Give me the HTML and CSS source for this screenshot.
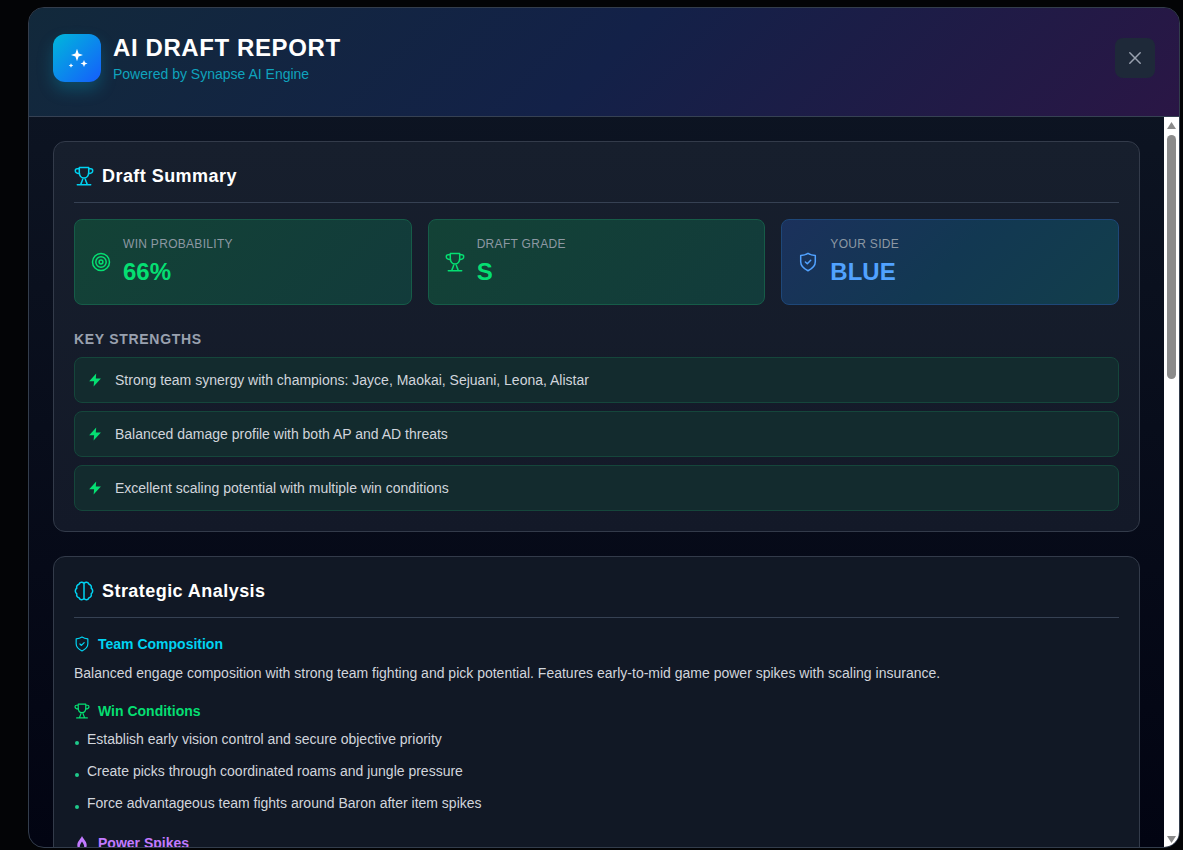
FILE: index.html
```html
<!DOCTYPE html>
<html lang="en">
<head>
    <meta charset="UTF-8">
    <meta name="viewport" content="width=device-width, initial-scale=1.0">
    <title>AI Draft Report</title>
    <link rel="stylesheet" href="styles.css">
</head>
<body>
    <!-- Shared icons -->
    <svg class="sprite" aria-hidden="true">
        <symbol id="icon-trophy" viewBox="0 0 20 20">
            <path d="M5.300 1.500h9.400v4.700c0 3-1.600 5.800-4.700 5.800S5.300 9.200 5.300 6.200zM5.300 2.800H3.200C2 2.800 1.300 3.600 1.300 4.700c0 1.700 1.700 2.800 4.300 3M14.700 2.800h2.100c1.200 0 1.900.800 1.900 1.900 0 1.700-1.700 2.800-4.300 3M8.800 12c0 2.800-1.300 3.500-2 6.500M11.200 12c0 2.800 1.300 3.500 2 6.500M3.300 18.700h13.400"/>
        </symbol>
        <symbol id="icon-target" viewBox="0 0 20 20">
            <circle cx="10" cy="10" r="8.500"/><circle cx="10" cy="10" r="5.200"/><circle cx="10" cy="10" r="1.900"/>
        </symbol>
        <symbol id="icon-shield" viewBox="0 0 20 20">
            <path d="M10 1.300c2.300 1.500 4.700 2.100 7.300 2.300v6.200c0 4.200-3 6.900-7.300 8.900-4.300-2-7.300-4.700-7.300-8.900V3.600C5.300 3.400 7.700 2.800 10 1.300zM7.400 10l1.900 1.800L12.700 8.300"/>
        </symbol>
        <symbol id="icon-bolt" viewBox="0 0 16 16">
            <path d="M9.200 1.500 2.200 9.300h4.900L6.600 14.500 13.900 6.600H8.800z"/>
        </symbol>
        <symbol id="icon-brain" viewBox="0 0 20 20">
            <path d="M10 2.500v15M10 2.500C8.500.700 5.800 1 5 3.300 3 3.800 2.200 5.600 2.800 7.200.800 8.700.800 11.300 2.800 12.800c-.600 2 .400 3.500 2.200 3.900.800 2.300 3.500 2.600 5 .800M10 2.500c1.500-1.800 4.200-1.500 5 .800 2 .500 2.800 2.300 2.200 3.900 2 1.500 2 4.100 0 5.600.600 2-.400 3.500-2.200 3.900-.800 2.300-3.500 2.600-5 .800"/>
        </symbol>
        <symbol id="icon-flame" viewBox="0 0 16 16">
            <path fill-rule="evenodd" d="M8 1C7 4 3.300 6 3.300 10.200 3.300 13 5.300 15 8 15s4.700-2 4.700-4.800C12.700 6 9 4 8 1zM8 6.500c.600 1.500 2.200 2.800 2.200 4.800 0 1.300-.900 2.200-2.200 2.200s-2.200-.900-2.200-2.200c0-2 1.600-3.300 2.200-4.800z"/>
        </symbol>
    </svg>

    <div class="modal" role="dialog" aria-labelledby="reportTitle">
        <header class="modal-header">
            <div class="logo">
                <svg viewBox="0 0 24 24" width="24" height="24" aria-hidden="true">
                    <path d="M12 2.700 13.600 7.400 18 9l-4.400 1.600L12 15.300l-1.600-4.700L6 9l4.400-1.600zM19 14l1 2.500 2.500 1-2.500 1-1 2.500-1-2.500-2.500-1 2.500-1zM6 17.200l.700 1.600 1.600.700-1.600.700L6 21.800l-.700-1.600-1.600-.700 1.600-.700z"/>
                </svg>
            </div>
            <div class="header-text">
                <h1 id="reportTitle">AI DRAFT REPORT</h1>
                <p>Powered by Synapse AI Engine</p>
            </div>
            <button type="button" class="close-btn" aria-label="Close">
                <svg viewBox="0 0 20 20" width="20" height="20" aria-hidden="true"><path d="M4.800 4.800l10.400 10.400M15.200 4.800l-10.400 10.400"/></svg>
            </button>
        </header>

        <div class="modal-body">
            <main class="content">
                <section class="card">
                    <h2><svg class="icon"><use href="#icon-trophy"/></svg>Draft Summary</h2>
                    <div class="stats">
                        <div class="stat stat-green">
                            <svg class="icon"><use href="#icon-target"/></svg>
                            <div>
                                <div class="stat-label">WIN PROBABILITY</div>
                                <div class="stat-value">66%</div>
                            </div>
                        </div>
                        <div class="stat stat-green">
                            <svg class="icon"><use href="#icon-trophy"/></svg>
                            <div>
                                <div class="stat-label">DRAFT GRADE</div>
                                <div class="stat-value">S</div>
                            </div>
                        </div>
                        <div class="stat stat-blue">
                            <svg class="icon"><use href="#icon-shield"/></svg>
                            <div>
                                <div class="stat-label">YOUR SIDE</div>
                                <div class="stat-value">BLUE</div>
                            </div>
                        </div>
                    </div>
                    <h3 class="strengths-title">KEY STRENGTHS</h3>
                    <ul class="strengths">
                        <li><svg class="icon-fill"><use href="#icon-bolt"/></svg>Strong team synergy with champions: Jayce, Maokai, Sejuani, Leona, Alistar</li>
                        <li><svg class="icon-fill"><use href="#icon-bolt"/></svg>Balanced damage profile with both AP and AD threats</li>
                        <li><svg class="icon-fill"><use href="#icon-bolt"/></svg>Excellent scaling potential with multiple win conditions</li>
                    </ul>
                </section>

                <section class="card">
                    <h2><svg class="icon"><use href="#icon-brain"/></svg>Strategic Analysis</h2>
                    <div class="topic">
                        <h3 class="cyan"><svg class="icon icon-small"><use href="#icon-shield"/></svg>Team Composition</h3>
                        <p>Balanced engage composition with strong team fighting and pick potential. Features early-to-mid game power spikes with scaling insurance.</p>
                    </div>
                    <div class="topic">
                        <h3 class="green"><svg class="icon icon-small"><use href="#icon-trophy"/></svg>Win Conditions</h3>
                        <ul class="conditions">
                            <li>Establish early vision control and secure objective priority</li>
                            <li>Create picks through coordinated roams and jungle pressure</li>
                            <li>Force advantageous team fights around Baron after item spikes</li>
                        </ul>
                    </div>
                    <div class="topic">
                        <h3 class="purple"><svg class="icon-fill"><use href="#icon-flame"/></svg>Power Spikes</h3>
                    </div>
                </section>
            </main>

            <div class="scrollbar" aria-hidden="true">
                <svg viewBox="0 0 15 18" width="15" height="18"><path d="M7.500 5 12 12H3z"/></svg>
                <div class="track"><div class="thumb"></div></div>
                <svg viewBox="0 0 15 16" width="15" height="16"><path d="M7.500 12 12 5H3z"/></svg>
            </div>
        </div>
    </div>
</body>
</html>
```

FILE: styles.css
```css
* {
    box-sizing: border-box;
    margin: 0;
    padding: 0;
}
body {
    display: flex;
    height: 100vh;
    padding: 7px 3px 2px 28px;
    overflow: hidden;
    background: #030406;
    color: #d1d5dc;
    font-family: "Liberation Sans", Arial, sans-serif;
    font-size: 14px;
    line-height: 20px;
}
ul {
    list-style: none;
}
.sprite {
    position: absolute;
    width: 0;
    height: 0;
}
.icon,
.icon-fill {
    flex: none;
    width: 20px;
    height: 20px;
    fill: none;
    stroke: currentColor;
    stroke-width: 1.5;
    stroke-linecap: round;
    stroke-linejoin: round;
}
.icon-small {
    width: 16px;
    height: 16px;
}
.icon-fill {
    width: 16px;
    height: 16px;
    fill: currentColor;
    stroke: none;
}

/* Modal */
.modal {
    display: flex;
    flex-direction: column;
    flex: 1;
    min-width: 0;
    overflow: hidden;
    border: 1px solid #333d4c;
    border-radius: 16px;
    background: linear-gradient(#0e1624, #020412);
}
.modal-header {
    display: flex;
    align-items: center;
    gap: 12px;
    padding: 24px 24px 32px;
    border-bottom: 1px solid #364153;
    background: linear-gradient(135deg, #12293b, #132148 50%, #2a1645);
}
.logo {
    display: flex;
    align-items: center;
    justify-content: center;
    width: 48px;
    height: 48px;
    border-radius: 12px;
    background: linear-gradient(135deg, #00b8db, #155dfc);
    box-shadow: 0 8px 16px rgba(0, 184, 219, 0.25);
}
.logo svg {
    fill: #fff;
}
.header-text {
    flex: 1;
}
.header-text h1 {
    color: #fff;
    font-size: 24px;
    line-height: 32px;
    letter-spacing: 0.025em;
}
.header-text p {
    color: #0fa3bd;
}
.close-btn {
    display: flex;
    align-items: center;
    justify-content: center;
    width: 40px;
    height: 40px;
    border: none;
    border-radius: 8px;
    background: #1e2939;
    cursor: pointer;
}
.close-btn svg {
    fill: none;
    stroke: #99a1af;
    stroke-width: 1.5;
    stroke-linecap: round;
}
.modal-body {
    display: flex;
    flex: 1;
    min-height: 0;
}
.content {
    flex: 1;
    min-width: 0;
    padding: 24px;
    overflow: hidden;
}

/* Cards */
.card {
    margin-bottom: 24px;
    padding: 20px;
    border: 1px solid #333b4a;
    border-radius: 12px;
    background: linear-gradient(#171f2d, #131928);
}
.card + .card {
    background: #111825;
}
.card h2 {
    display: flex;
    align-items: center;
    gap: 8px;
    margin-bottom: 16px;
    padding-bottom: 12px;
    border-bottom: 1px solid #364153;
    color: #fff;
    font-size: 18px;
    line-height: 28px;
    letter-spacing: 0.025em;
}
.card h2 .icon {
    color: #00d3f2;
}
.stats {
    display: grid;
    grid-template-columns: repeat(3, 1fr);
    gap: 16px;
    margin-bottom: 24px;
}
.stat {
    display: flex;
    align-items: center;
    gap: 12px;
    padding: 16px;
    border: 1px solid;
    border-radius: 8px;
}
.stat-green {
    border-color: #165c48;
    background: linear-gradient(135deg, #134236, #123b3b);
    color: #05df72;
}
.stat-blue {
    border-color: #1e4778;
    background: linear-gradient(135deg, #1b315c, #123852 50%, #123e4b);
    color: #51a2ff;
}
.stat-label {
    margin-bottom: 4px;
    color: #8d98a3;
    font-size: 12px;
    line-height: 16px;
    letter-spacing: 0.025em;
}
.stat-value {
    font-size: 24px;
    font-weight: bold;
    line-height: 32px;
}
.strengths-title {
    margin-bottom: 8px;
    color: #99a1af;
    font-size: 14px;
    letter-spacing: 0.05em;
}
.strengths li {
    display: flex;
    align-items: center;
    gap: 12px;
    margin-top: 8px;
    padding: 12px;
    border: 1px solid #15463b;
    border-radius: 8px;
    background: #132b2e;
}
.strengths .icon-fill {
    color: #05df72;
}

/* Analysis */
.topic {
    margin-bottom: 16px;
}
.topic h3 {
    display: flex;
    align-items: center;
    gap: 8px;
    font-size: 14px;
}
.topic p {
    margin-top: 8px;
    line-height: 23px;
}
.cyan {
    color: #00d3f2;
}
.green {
    color: #05df72;
}
.purple {
    color: #c27aff;
}
.conditions {
    display: grid;
    gap: 4px;
    margin-top: 4px;
}
.conditions li {
    display: flex;
    align-items: center;
    gap: 8px;
    padding: 4px 1px;
}
.conditions li::before {
    content: "";
    width: 4px;
    height: 4px;
    margin-top: 8px;
    border-radius: 50%;
    background: #1fc98b;
}

/* Scrollbar */
.scrollbar {
    display: flex;
    flex-direction: column;
    width: 15px;
    background: #fff;
}
.scrollbar svg {
    flex: none;
    fill: #8b8b8b;
}
.track {
    flex: 1;
    padding: 0 3px;
}
.thumb {
    height: 35%;
    border-radius: 5px;
    background: #8b8b8b;
}
```
